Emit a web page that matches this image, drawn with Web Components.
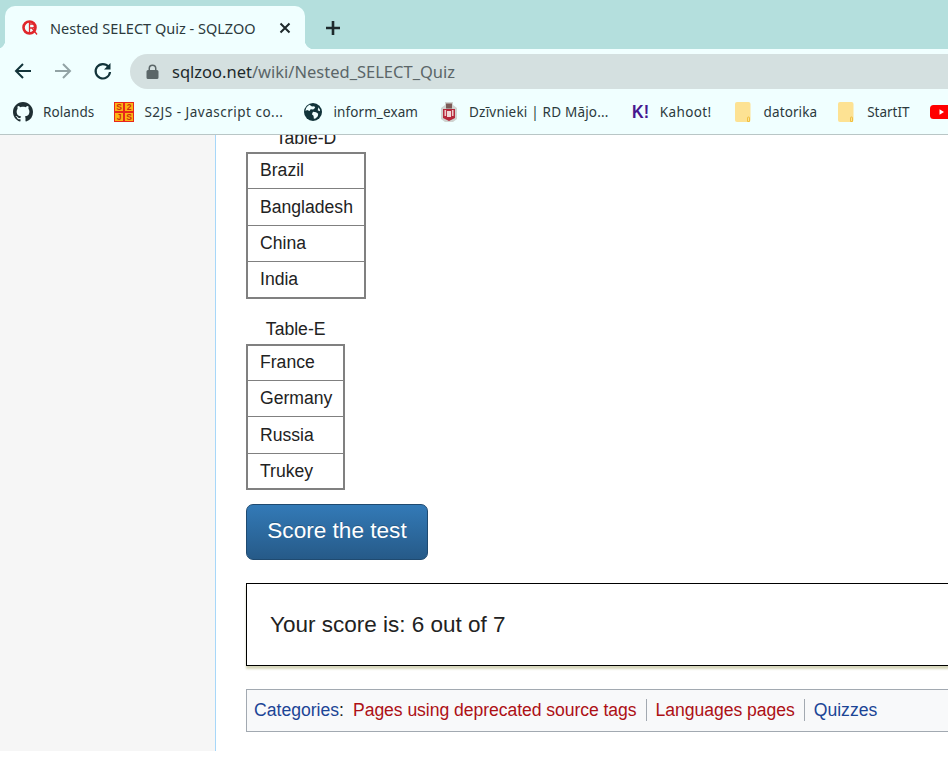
<!DOCTYPE html>
<html lang="en"><head><meta charset="utf-8"><title>Nested SELECT Quiz - SQLZOO</title>
<style>
html,body{margin:0;height:100%;background:#fff;overflow:hidden}
body{font-family:"Liberation Sans",Arial,sans-serif;color:#222}
</style></head><body>
<browser-chrome>
  <browser-tab slot="tab">Nested SELECT Quiz - SQLZOO</browser-tab>
  <book-mark icon="github" style="margin-right:-1px;letter-spacing:.1px">Rolands</book-mark>
  <book-mark icon="s2js" style="letter-spacing:.5px">S2JS - Javascript co...</book-mark>
  <book-mark icon="globe" style="letter-spacing:.1px;margin-left:-1px">inform_exam</book-mark>
  <book-mark icon="crest" style="letter-spacing:.2px;margin-right:2px">Dzīvnieki | RD Mājo...</book-mark>
  <book-mark icon="kahoot" style="letter-spacing:.4px;margin-right:1px">Kahoot!</book-mark>
  <book-mark icon="folder" style="letter-spacing:.1px;margin-right:-1px">datorika</book-mark>
  <book-mark icon="folder" style="margin-right:-1px">StartIT</book-mark>
  <book-mark icon="youtube"></book-mark>
</browser-chrome>
<wiki-page>
  <quiz-table caption="Table-D" style="margin-top:-10px"><quiz-row>Brazil</quiz-row><quiz-row>Bangladesh</quiz-row><quiz-row>China</quiz-row><quiz-row>India</quiz-row></quiz-table>
  <quiz-table caption="Table-E" style="margin-top:17px;--cap:28px"><quiz-row>France</quiz-row><quiz-row>Germany</quiz-row><quiz-row>Russia</quiz-row><quiz-row>Trukey</quiz-row></quiz-table>
  <score-button>Score the test</score-button>
  <score-box>Your score is: 6 out of 7</score-box>
  <cat-links>
    <cat-link kind="blue" plain>Categories</cat-link>
    <cat-link kind="red" style="letter-spacing:-.06px">Pages using deprecated source tags</cat-link>
    <cat-link kind="red" sep style="letter-spacing:-.05px">Languages pages</cat-link>
    <cat-link kind="blue" sep>Quizzes</cat-link>
  </cat-links>
</wiki-page>
<script>
const def=(name,html)=>{customElements.define(name,class extends HTMLElement{
  connectedCallback(){ if(this.shadowRoot) return; const r=this.attachShadow({mode:'open'}); r.innerHTML=typeof html==='function'?html(this):html; }
});};
const UI='"Noto Sans","Open Sans",sans-serif';
const icons={
github:`<svg width="20" height="20" viewBox="0 0 16 16"><path fill="#1f2f33" d="M8 0C3.58 0 0 3.58 0 8c0 3.54 2.29 6.53 5.47 7.59.4.07.55-.17.55-.38 0-.19-.01-.82-.01-1.49-2.01.37-2.53-.49-2.69-.94-.09-.23-.48-.94-.82-1.13-.28-.15-.68-.52-.01-.53.63-.01 1.08.58 1.23.82.72 1.21 1.87.87 2.33.66.07-.52.28-.87.51-1.07-1.78-.2-3.64-.89-3.64-3.95 0-.87.31-1.59.82-2.15-.08-.2-.36-1.02.08-2.12 0 0 .67-.21 2.2.82.64-.18 1.32-.27 2-.27s1.36.09 2 .27c1.53-1.04 2.2-.82 2.2-.82.44 1.1.16 1.92.08 2.12.51.56.82 1.27.82 2.15 0 3.07-1.87 3.75-3.65 3.95.29.25.54.73.54 1.48 0 1.07-.01 1.93-.01 2.2 0 .21.15.46.55.38A8.01 8.01 0 0 0 16 8c0-4.42-3.58-8-8-8z"/></svg>`,
s2js:`<svg width="20" height="20" viewBox="0 0 20 20"><rect width="20" height="20" fill="#e8261c"/><rect x="1" y="1" width="8" height="8" fill="#fbb314"/><rect x="11" y="1" width="8" height="8" fill="#fbb314"/><rect x="1" y="11" width="8" height="8" fill="#fbb314"/><rect x="11" y="11" width="8" height="8" fill="#fbb314"/><g font-family="Liberation Sans" font-weight="700" font-size="8.500" text-anchor="middle" fill="#d02a0a" style="letter-spacing:0"><text x="5" y="8">S</text><text x="15" y="8">2</text><text x="5" y="18">J</text><text x="15" y="18">S</text></g></svg>`,
globe:`<svg width="20" height="20" viewBox="0 0 20 20"><circle cx="10" cy="10" r="9" fill="#12343a"/><path fill="#f0ffff" d="M6.5 2.8 9 4.6l2.2-.3 1 1.5-2 1.7-2.5-.2-1.2 1.6-2.4-.8-1.6 1A7.6 7.6 0 0 1 6.5 2.8zM10 9.8l3 .4 2.2 1.6-.4 2.4-2.3 2.2-1.6.3-.4-3-1.6-1.5zM15.5 5.2l1.6 2.7-.4 1.4-2-1.1z"/></svg>`,
crest:`<svg width="20" height="22" viewBox="-1 0 20 22"><path fill="#cfd3d0" d="M1 7 5 4V1h8v3l4 3v11l-4 3H5l-4-3z"/><path fill="#b5283a" d="M3 8h12v9l-6 3-6-3z"/><rect x="6" y="2.5" width="6" height="5" fill="#7b5a56"/><rect x="7" y="10" width="4" height="6" fill="#f0d8d8"/><rect x="4.500" y="9" width="1.600" height="6" fill="#efc9c9"/><rect x="11.900" y="9" width="1.600" height="6" fill="#efc9c9"/></svg>`,
kahoot:`<svg width="18" height="20" viewBox="0 0 18 20"><text x="0" y="16" font-family="Liberation Sans" font-weight="700" font-size="18" fill="#46178f" textLength="17" lengthAdjust="spacingAndGlyphs" style="letter-spacing:0">K!</text></svg>`,
folder:`<svg width="20" height="20" viewBox="0 0 20 20"><rect x="1" y="0" width="15.500" height="20" rx="2" fill="#fde293"/><path fill="#fde293" stroke="#f0c040" stroke-width="1" d="M13.500 19.500v-3.500a1 1 0 0 1 2 0v3.500z"/></svg>`,
youtube:`<svg width="24" height="20" viewBox="0 0 24 20"><rect x="0" y="3" width="24" height="14" rx="3.500" fill="#ff0000"/><path fill="#fff" d="M9.500 7.300v5.400l4.500-2.700z"/></svg>`
};
def('browser-tab',`<style>
:host{position:relative;display:flex;align-items:center;box-sizing:border-box;width:300px;height:43px;margin-left:5px;background:#f0ffff;border-radius:10px 10px 0 0;font:14.500px/20px ${UI};color:#2c3a3d;padding-left:16px}
:host::before,:host::after{content:"";position:absolute;bottom:0;width:9px;height:9px}
:host::before{left:-9px;background:radial-gradient(circle at 0 0,transparent 9px,#f0ffff 9.500px)}
:host::after{right:-9px;background:radial-gradient(circle at 100% 0,transparent 9px,#f0ffff 9.500px)}
.t{margin-left:11px;flex:1;white-space:nowrap}
svg{flex:none}.x{margin-right:14px}
</style><svg width="18" height="18" viewBox="0 0 18 18" fill="none" stroke="#e0262b"><circle cx="8.500" cy="8.500" r="6" stroke-width="2.600"/><path stroke-width="1.300" d="M8.500 2.500v12M8.500 5h3a2 2 0 0 1 0 4H8.500M11 9l5 6.500"/></svg><span class="t"><slot></slot></span><svg class="x" width="12" height="12" viewBox="0 0 12 12"><path stroke="#1e2a2c" stroke-width="2" d="M1.500 1.500l9 9M10.500 1.500l-9 9"/></svg>`);
def('book-mark',el=>`<style>
:host{display:flex;align-items:center;gap:10px;flex:none;font:13.500px/20px ${UI};color:#2c3a3d;white-space:nowrap}
svg{display:block}
</style>${icons[el.getAttribute('icon')]||''}<slot></slot>`);
def('browser-chrome',`<style>
:host{display:block;height:135px;overflow:hidden;background:#f0ffff;box-sizing:border-box;border-bottom:1px solid #b9c6c6}
.strip{height:49px;background:#b4dfdd;display:flex;align-items:flex-end;gap:20px;box-sizing:border-box;padding-top:6px}
.plus{align-self:center;display:block}
.bar{height:43px;display:flex;align-items:center;box-sizing:border-box;padding:5px 0 3px 13px}
.nav{display:flex;gap:20px;align-items:center;flex:none;width:117px;margin-top:-2px}
.omni{flex:1;height:35px;background:#d4e0e0;border-radius:17.500px 0 0 17.500px;display:flex;align-items:center;padding-left:16px;gap:13px;font:16.500px/24px ${UI};white-space:nowrap;color:#5b6668}
.omni b{font-weight:400;color:#1e2a2c}
.marks{height:42px;box-sizing:border-box;padding:0 0 2px 13px;display:flex;align-items:center;gap:21px;overflow:hidden}
</style>
<div class="strip"><slot name="tab"></slot><svg class="plus" width="16" height="16" viewBox="0 0 16 16"><path stroke="#1e2a2c" stroke-width="2.600" d="M8 1v14M1 8h14"/></svg></div>
<div class="bar"><div class="nav">
<svg width="20" height="20" viewBox="0 0 20 20" fill="none" stroke="#12343a" stroke-width="2"><path d="M18 10H3M10 3l-7 7 7 7"/></svg>
<svg width="20" height="20" viewBox="0 0 20 20" fill="none" stroke="#92a3a5" stroke-width="2"><path d="M2 10h15M10 3l7 7-7 7"/></svg>
<svg width="20" height="20" viewBox="0 0 20 20" fill="none"><path stroke="#12343a" stroke-width="2.200" d="M15.500 5.800A7.200 7.200 0 1 0 17 11"/><path fill="#12343a" d="M17.500 2v6.500H11z"/></svg>
</div><div class="omni"><svg width="13" height="15" viewBox="0 0 12 15"><path fill="#5b6668" d="M2 6V4.500a4 4 0 0 1 8 0V6h.500A1.500 1.500 0 0 1 12 7.500v6a1.500 1.500 0 0 1-1.500 1.500h-9A1.500 1.500 0 0 1 0 13.500v-6A1.500 1.500 0 0 1 1.500 6zm1.500 0h5V4.500a2.500 2.500 0 0 0-5 0z"/></svg><span><b>sqlzoo.net</b>/wiki/Nested_SELECT_Quiz</span></div></div>
<div class="marks"><slot></slot></div>`);
def('wiki-page',`<style>
:host{display:flex;height:616px;background:#f6f6f6}
.side{flex:none;width:215px}
.main{flex:1;min-width:0;background:#fff;border-left:1px solid #a7d7f9;padding-left:30px;overflow:hidden;display:flow-root}
.col{width:760px;display:flex;flex-direction:column;align-items:flex-start}
</style><div class="side"></div><div class="main"><div class="col"><slot></slot></div></div>`);
def('quiz-table',el=>`<style>
:host{display:block;font:17.600px/26.400px "Liberation Sans",Arial,sans-serif;color:#222}
.cap{text-align:center;height:var(--cap,27px)}
.box{border:1px solid #808080;box-shadow:inset 0 0 0 1px #808080;display:flex;flex-direction:column}
</style><div class="cap">${el.getAttribute('caption')}</div><div class="box"><slot></slot></div>`);
def('quiz-row',`<style>
:host{display:block;padding:4.200px 12px 4.800px 13px;border-top:1px solid #808080}
:host(:first-child){border-top:0}
</style><slot></slot>`);
def('score-button',`<style>
:host{display:block;box-sizing:border-box;width:182px;height:56px;margin-top:14px;border:1px solid #1f4a70;border-radius:7px;background:linear-gradient(#337ab7,#265a88);color:#fff;font:22.600px/52px "Liberation Sans",Arial,sans-serif;text-align:center;text-shadow:0 -1px 0 rgba(0,0,0,.2)}
</style><slot></slot>`);
def('score-box',`<style>
:host{display:block;align-self:stretch;box-sizing:border-box;height:83px;margin-top:23px;border:1px solid #000;box-shadow:0 3px 2px #d6d6bb;padding-left:23px;font:22.500px/81px "Liberation Sans",Arial,sans-serif;color:#222}
</style><slot></slot>`);
def('cat-links',`<style>
:host{display:flex;align-items:center;align-self:stretch;box-sizing:border-box;height:43px;margin-top:23px;border:1px solid #a2a9b1;background:#f8f9fa;padding:0 0 2px 7px;font:17.600px/22px "Liberation Sans",Arial,sans-serif}
</style><slot></slot>`);
def('cat-link',el=>`<style>
:host{display:inline-flex;align-items:center;white-space:nowrap}
.s{display:inline-block;width:1px;height:22px;background:#a2a9b1;margin:0 9px}
.c{color:#222;margin-right:9px}
</style>${el.hasAttribute('sep')?'<span class="s"></span>':''}<span style="color:${el.getAttribute('kind')==='red'?'#ad1015':'#1c4596'}"><slot></slot></span>${el.hasAttribute('plain')?'<span class="c">:</span>':''}`);
</script>
</body></html>
